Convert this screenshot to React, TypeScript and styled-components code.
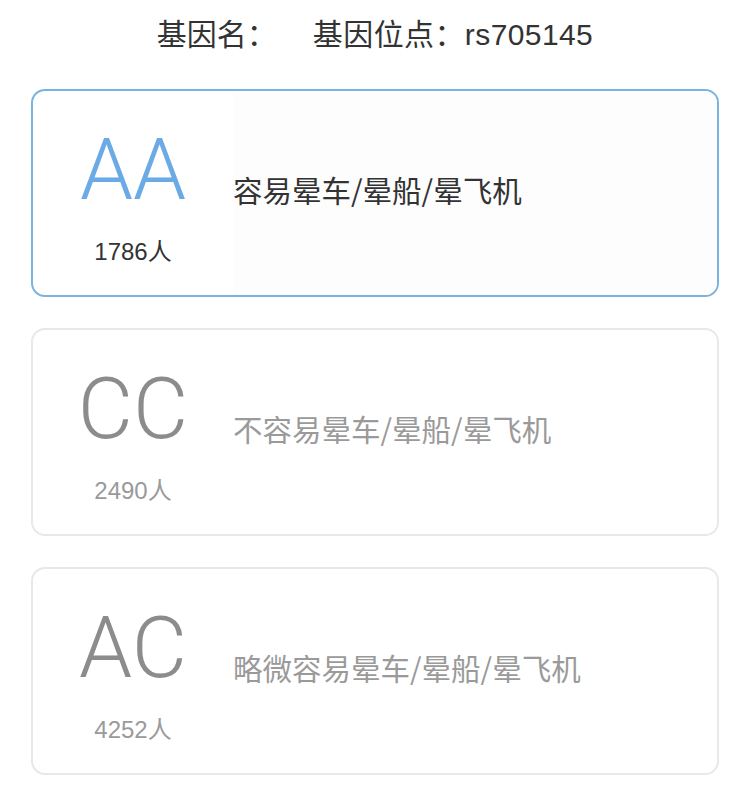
import React from 'react';
import styled, { createGlobalStyle } from 'styled-components';

type Genotype = {
  code: string;
  count: number;
  desc: string;
};

const GENOTYPES: Genotype[] = [
  { code: 'AA', count: 1786, desc: '容易晕车/晕船/晕飞机' },
  { code: 'CC', count: 2490, desc: '不容易晕车/晕船/晕飞机' },
  { code: 'AC', count: 4252, desc: '略微容易晕车/晕船/晕飞机' },
];

const MY_GENOTYPE = 'AA';

const GlobalStyle = createGlobalStyle`
  html, body {
    margin: 0;
    padding: 0;
    background: #ffffff;
  }
  body {
    font-family: "Liberation Sans", "Noto Sans CJK SC", sans-serif;
  }
`;

const Page = styled.div`
  width: 750px;
  padding: 20px 31px 16px;
  box-sizing: border-box;
`;

const Header = styled.div`
  display: flex;
  justify-content: center;
  gap: 36px;
  margin-bottom: 39px;

  font-size: 30px;
  line-height: 30px;
  color: #333333;

  .site {
    letter-spacing: 0.4px;
  }
`;

const CardList = styled.div`
  display: flex;
  flex-direction: column;
  gap: 31px;
`;

const Card = styled.div<{ $active: boolean }>`
  display: flex;
  height: 208px;
  box-sizing: border-box;
  border: 2px solid ${({ $active }) => ($active ? '#79b3df' : '#e8e8e8')};
  border-radius: 14px;
  overflow: hidden;
  background: #ffffff;
`;

const Side = styled.div`
  display: flex;
  flex-direction: column;
  align-items: center;
  width: 200px;
  flex-shrink: 0;
  padding-top: 37px;
  box-sizing: border-box;
`;

const Code = styled.div<{ $active: boolean }>`
  font-family: Roboto, "Liberation Sans", sans-serif;
  font-weight: 300;
  font-size: 85px;
  line-height: 84px;
  color: ${({ $active }) => ($active ? '#6aabe5' : '#8c8c8c')};
`;

const Count = styled.div<{ $active: boolean }>`
  margin-top: 25px;
  font-size: 24px;
  line-height: 30px;
  color: ${({ $active }) => ($active ? '#333333' : '#9a9a9a')};
`;

const Desc = styled.div<{ $active: boolean }>`
  display: flex;
  align-items: center;
  flex: 1;
  padding-bottom: 8px;
  font-family: "Noto Sans CJK SC", sans-serif;
  font-size: 29.5px;
  color: ${({ $active }) => ($active ? '#333333' : '#9a9a9a')};
  background: ${({ $active }) => ($active ? '#fdfdfd' : '#ffffff')};
`;

const App = () => {
  return (
    <Page>
      <GlobalStyle />
      <Header>
        <span>基因名：</span>
        <span className="site">基因位点：rs705145</span>
      </Header>
      <CardList>
        {GENOTYPES.map((g) => {
          const active = g.code === MY_GENOTYPE;
          return (
            <Card key={g.code} $active={active}>
              <Side>
                <Code $active={active}>{g.code}</Code>
                <Count $active={active}>{g.count}人</Count>
              </Side>
              <Desc $active={active}>{g.desc}</Desc>
            </Card>
          );
        })}
      </CardList>
    </Page>
  );
};

export default App;
